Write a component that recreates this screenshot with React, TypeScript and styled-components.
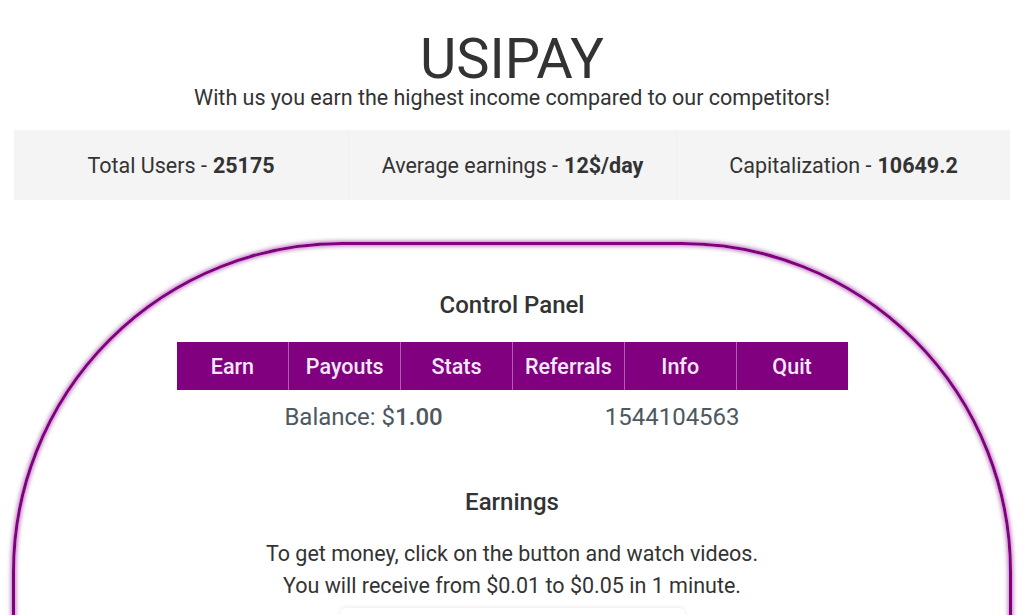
import React from "react";
import styled, { createGlobalStyle } from "styled-components";

const Global = createGlobalStyle`
  html, body { margin: 0; padding: 0; background: #ffffff; }
  body { font-family: Roboto, "Liberation Sans", Arial, sans-serif; color: #333333; overflow: hidden; }
  * { box-sizing: border-box; }
`;

const Page = styled.div`
  width: 1024px;
  height: 615px;
  overflow: hidden;
  display: flex;
  flex-direction: column;
  align-items: center;
  & > * { flex-shrink: 0; }
`;

const Title = styled.h1`
  margin: 31px 0 0;
  font-size: 56px;
  line-height: 56px;
  font-weight: 400;
  color: #333333;
`;

const Subtitle = styled.p`
  margin: 0;
  font-size: 21.5px;
  line-height: 22px;
  color: #333333;
`;

const StatsBar = styled.div`
  margin-top: 21px;
  width: 996px;
  height: 70px;
  display: grid;
  grid-template-columns: 334px 328px 334px;
  background: #f4f4f4;
`;

const Stat = styled.div<{ $divider?: boolean }>`
  display: flex;
  align-items: center;
  justify-content: center;
  font-size: 21.5px;
  color: #333333;
  border-left: ${(p) => (p.$divider ? "1px solid #efefef" : "none")};
  b { font-weight: 700; margin-left: 6px; }
`;

const Panel = styled.div`
  margin-top: 42px;
  width: 1000px;
  height: 700px;
  border: 3px solid #800080;
  border-radius: 330px 330px 0 0;
  box-shadow: 0 0 4px 1px rgba(128, 0, 128, 0.55), inset 0 0 4px 1px rgba(128, 0, 128, 0.55);
  display: flex;
  flex-direction: column;
  align-items: center;
  padding-top: 45px;
  & > * { flex-shrink: 0; }
`;

const Heading = styled.h2<{ $top?: number }>`
  margin: ${(p) => p.$top ?? 0}px 0 0;
  font-size: 24px;
  line-height: 30px;
  font-weight: 500;
  color: #333333;
`;

const Nav = styled.nav`
  margin-top: 22px;
  width: 671px;
  height: 48px;
  display: grid;
  grid-template-columns: repeat(6, 1fr);
  background: #800080;
`;

const NavItem = styled.div<{ $first?: boolean }>`
  display: flex;
  align-items: center;
  justify-content: center;
  color: #f6e8f6;
  font-size: 21.5px;
  font-weight: 500;
  border-left: ${(p) => (p.$first ? "none" : "1px solid #b25cb2")};
`;

const InfoRow = styled.div`
  margin-top: 12px;
  display: flex;
  justify-content: center;
  gap: 162px;
  font-size: 24px;
  line-height: 30px;
  color: #4d5861;
  b { font-weight: 500; }
`;

const Text = styled.p`
  margin: 0;
  font-size: 21.5px;
  line-height: 32px;
  color: #333333;
  text-align: center;
`;

const Lines = styled.div`
  margin-top: 21px;
`;

const Button = styled.div`
  margin-top: 6px;
  width: 345px;
  height: 50px;
  border-radius: 6px;
  background: #ffffff;
  box-shadow: 0 -1px 4px rgba(0, 0, 0, 0.08);
`;

const stats = [
  { label: "Total Users -", value: "25175" },
  { label: "Average earnings -", value: "12$/day" },
  { label: "Capitalization -", value: "10649.2" },
];

const menu = ["Earn", "Payouts", "Stats", "Referrals", "Info", "Quit"];

export default function App() {
  return (
    <>
      <Global />
      <Page>
        <Title>USIPAY</Title>
        <Subtitle>With us you earn the highest income compared to our competitors!</Subtitle>
        <StatsBar>
          {stats.map((s, i) => (
            <Stat key={s.label} $divider={i > 0}>
              {s.label}
              <b>{s.value}</b>
            </Stat>
          ))}
        </StatsBar>
        <Panel>
          <Heading>Control Panel</Heading>
          <Nav>
            {menu.map((m, i) => (
              <NavItem key={m} $first={i === 0}>
                {m}
              </NavItem>
            ))}
          </Nav>
          <InfoRow>
            <span>
              Balance: $<b>1.00</b>
            </span>
            <span>1544104563</span>
          </InfoRow>
          <Heading $top={55}>Earnings</Heading>
          <Lines>
            <Text>To get money, click on the button and watch videos.</Text>
            <Text>You will receive from $0.01 to $0.05 in 1 minute.</Text>
          </Lines>
          <Button />
        </Panel>
      </Page>
    </>
  );
}
